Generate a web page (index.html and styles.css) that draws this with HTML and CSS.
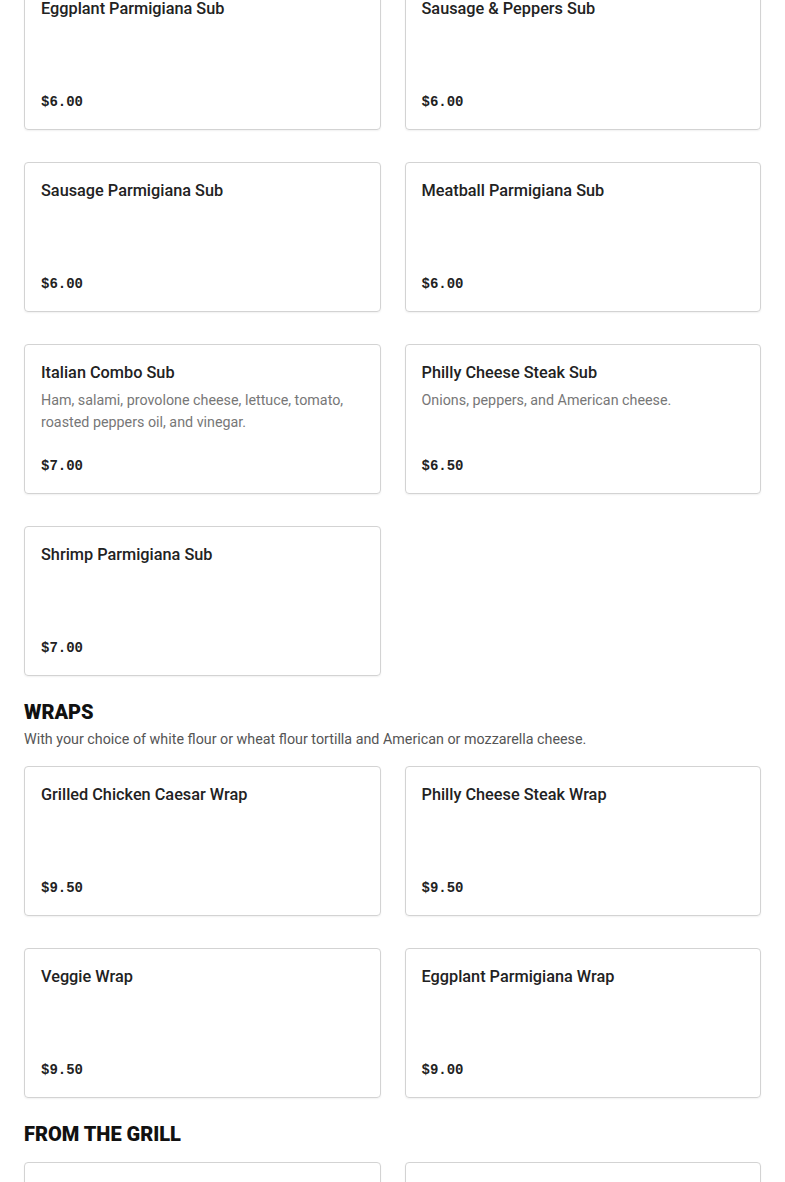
FILE: index.html
```html
<!DOCTYPE html>
<html lang="en">
<head>
<meta charset="utf-8">
<title>Menu</title>
<link rel="stylesheet" href="styles.css">
</head>
<body>
<main class="menu">
  <section class="section section-first">
    <div class="grid">
      <article class="card"><h3 class="item-name">Eggplant Parmigiana Sub</h3><p class="price">$6.00</p></article>
      <article class="card"><h3 class="item-name">Sausage &amp; Peppers Sub</h3><p class="price">$6.00</p></article>
      <article class="card"><h3 class="item-name">Sausage Parmigiana Sub</h3><p class="price">$6.00</p></article>
      <article class="card"><h3 class="item-name">Meatball Parmigiana Sub</h3><p class="price">$6.00</p></article>
      <article class="card"><h3 class="item-name">Italian Combo Sub</h3><p class="item-desc">Ham, salami, provolone cheese, lettuce, tomato, roasted peppers oil, and vinegar.</p><p class="price">$7.00</p></article>
      <article class="card"><h3 class="item-name">Philly Cheese Steak Sub</h3><p class="item-desc">Onions, peppers, and American cheese.</p><p class="price">$6.50</p></article>
      <article class="card"><h3 class="item-name">Shrimp Parmigiana Sub</h3><p class="price">$7.00</p></article>
    </div>
  </section>
  <section class="section">
    <h2 class="section-title">Wraps</h2>
    <p class="section-desc">With your choice of white flour or wheat flour tortilla and American or mozzarella cheese.</p>
    <div class="grid">
      <article class="card"><h3 class="item-name">Grilled Chicken Caesar Wrap</h3><p class="price">$9.50</p></article>
      <article class="card"><h3 class="item-name">Philly Cheese Steak Wrap</h3><p class="price">$9.50</p></article>
      <article class="card"><h3 class="item-name">Veggie Wrap</h3><p class="price">$9.50</p></article>
      <article class="card"><h3 class="item-name">Eggplant Parmigiana Wrap</h3><p class="price">$9.00</p></article>
    </div>
  </section>
  <section class="section">
    <h2 class="section-title">From the Grill</h2>
    <div class="grid">
      <article class="card"></article>
      <article class="card"></article>
    </div>
  </section>
</main>
</body>
</html>
```
FILE: styles.css
```css
html, body {
  margin: 0;
  padding: 0;
  background: #ffffff;
}
body {
  font-family: "Roboto", "Liberation Sans", Arial, sans-serif;
  color: #1f1f1f;
}
.menu {
  padding: 0 24px;
  margin-top: -20px;
}
.section {
  margin-bottom: 24px;
}
.section-title {
  margin: 0;
  font-family: "Roboto", "Liberation Sans", sans-serif;
  font-weight: 900;
  font-size: 20px;
  line-height: 24px;
  text-transform: uppercase;
  color: #111;
}
.section-desc {
  margin: 4px 0 0;
  font-size: 14.3px;
  line-height: 22px;
  color: #555;
}
.section-title + .grid,
.section-desc + .grid {
  margin-top: 16px;
}
.grid {
  display: grid;
  grid-template-columns: 1fr 1fr;
  column-gap: 24px;
  row-gap: 32px;
}
.card {
  box-sizing: border-box;
  height: 150px;
  border: 1px solid #d3d3d3;
  border-radius: 4px;
  box-shadow: 0 1px 2px rgba(0, 0, 0, 0.06);
  padding: 16px;
  display: flex;
  flex-direction: column;
}
.item-name {
  margin: 0;
  font-size: 16.3px;
  font-weight: 500;
  line-height: 24px;
  color: #222;
}
.item-desc {
  margin: 4px 0 0;
  font-size: 14.3px;
  line-height: 22px;
  color: #777;
}
.price {
  margin: auto 0 0;
  font-family: "Liberation Mono", "DejaVu Sans Mono", monospace;
  font-weight: 700;
  font-size: 14px;
  line-height: 22px;
  color: #222;
}
```
